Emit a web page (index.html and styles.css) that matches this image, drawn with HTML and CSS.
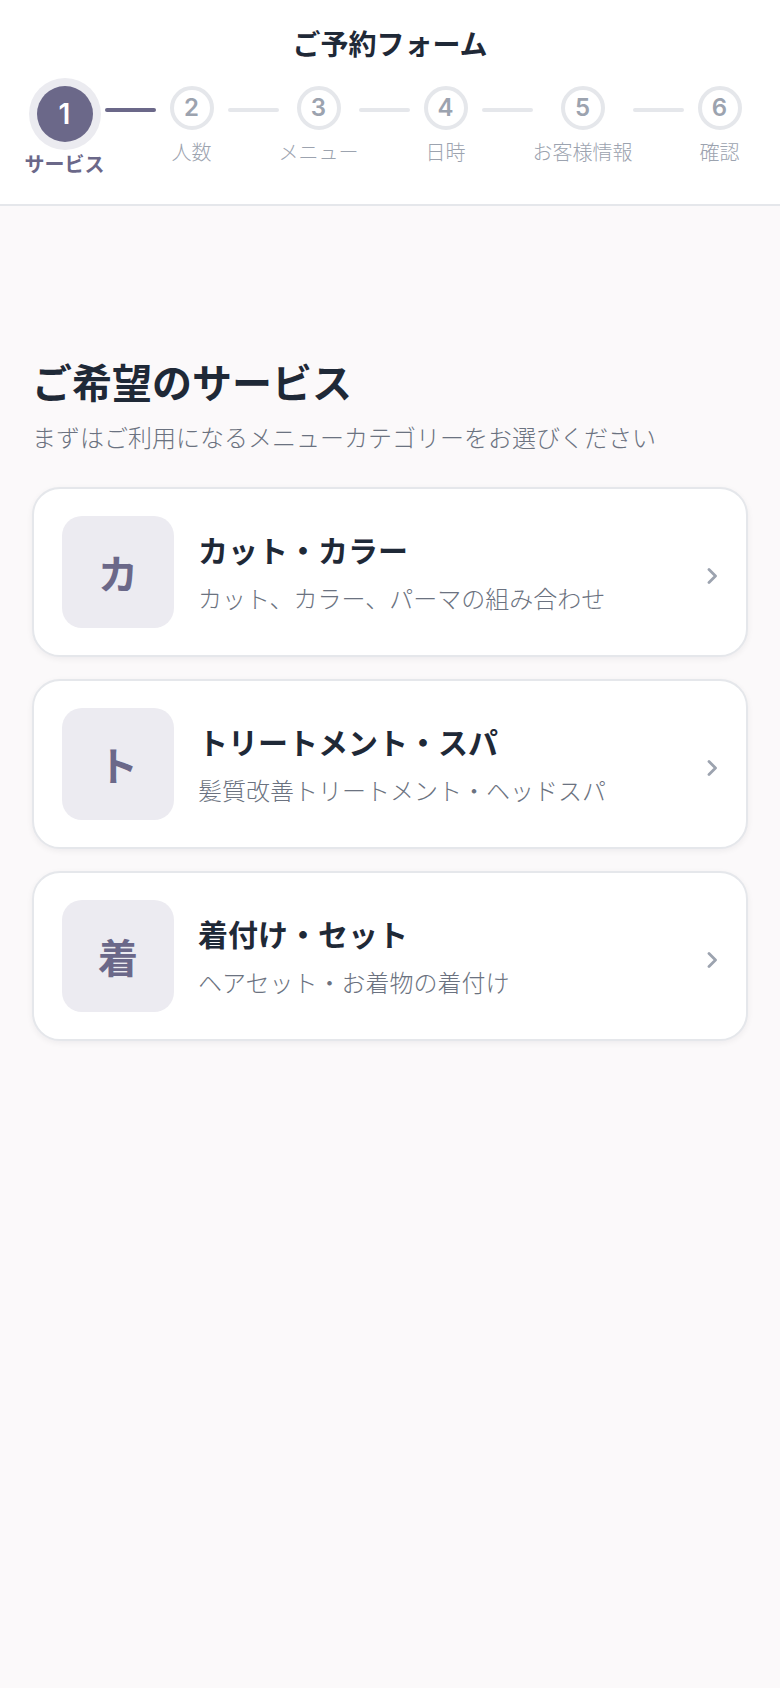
FILE: index.html
```html
<!DOCTYPE html>
<html lang="ja">
<head>
<meta charset="utf-8">
<title>ご予約フォーム</title>
<link rel="stylesheet" href="styles.css">
</head>
<body>
<header class="header">
  <h1 class="header-title">ご予約フォーム</h1>
  <ol class="steps">
    <li class="step step-active"><span class="step-circle">1</span><span class="step-label">サービス</span></li>
    <li class="step-line step-line-done"></li>
    <li class="step"><span class="step-circle">2</span><span class="step-label">人数</span></li>
    <li class="step-line"></li>
    <li class="step"><span class="step-circle">3</span><span class="step-label">メニュー</span></li>
    <li class="step-line"></li>
    <li class="step"><span class="step-circle">4</span><span class="step-label">日時</span></li>
    <li class="step-line"></li>
    <li class="step"><span class="step-circle">5</span><span class="step-label">お客様情報</span></li>
    <li class="step-line"></li>
    <li class="step"><span class="step-circle">6</span><span class="step-label">確認</span></li>
  </ol>
</header>
<main class="main">
  <h2 class="section-title">ご希望のサービス</h2>
  <p class="section-sub">まずはご利用になるメニューカテゴリーをお選びください</p>
  <div class="cards">
    <a class="card" href="#">
      <span class="card-icon">カ</span>
      <span class="card-body">
        <span class="card-title">カット・カラー</span>
        <span class="card-desc">カット、カラー、パーマの組み合わせ</span>
      </span>
      <svg class="chev" width="11" height="16" viewBox="0 0 11 16"><polyline points="2,1.5 8.5,8 2,14.5" fill="none" stroke="#9ca3af" stroke-width="2.8" stroke-linecap="round" stroke-linejoin="round"/></svg>
    </a>
    <a class="card" href="#">
      <span class="card-icon">ト</span>
      <span class="card-body">
        <span class="card-title">トリートメント・スパ</span>
        <span class="card-desc">髪質改善トリートメント・ヘッドスパ</span>
      </span>
      <svg class="chev" width="11" height="16" viewBox="0 0 11 16"><polyline points="2,1.5 8.5,8 2,14.5" fill="none" stroke="#9ca3af" stroke-width="2.8" stroke-linecap="round" stroke-linejoin="round"/></svg>
    </a>
    <a class="card" href="#">
      <span class="card-icon">着</span>
      <span class="card-body">
        <span class="card-title">着付け・セット</span>
        <span class="card-desc">ヘアセット・お着物の着付け</span>
      </span>
      <svg class="chev" width="11" height="16" viewBox="0 0 11 16"><polyline points="2,1.5 8.5,8 2,14.5" fill="none" stroke="#9ca3af" stroke-width="2.8" stroke-linecap="round" stroke-linejoin="round"/></svg>
    </a>
  </div>
</main>
</body>
</html>
```
FILE: styles.css
```css
* { box-sizing: border-box; }
html, body {
  margin: 0;
  padding: 0;
}
body {
  background: #fbf9fa;
  font-family: "Noto Sans CJK JP", "Noto Sans", sans-serif;
  color: #1f2937;
  min-height: 1688px;
}
.header {
  background: #ffffff;
  border-bottom: 2px solid #e5e7eb;
  padding: 22px 0 26px;
}
.header-title {
  margin: 0;
  text-align: center;
  font-size: 28px;
  line-height: 42px;
  font-weight: 700;
  color: #1f2937;
}
.steps {
  list-style: none;
  margin: 22px 0 0;
  padding: 0;
  display: flex;
  justify-content: center;
  align-items: flex-start;
}
.step {
  min-width: 72px;
  display: flex;
  flex-direction: column;
  align-items: center;
}
.step-circle {
  width: 44px;
  height: 44px;
  border-radius: 50%;
  border: 4px solid #e5e7eb;
  background: #ffffff;
  color: #9ca3af;
  font-family: Inter, "Noto Sans", sans-serif;
  font-size: 24px;
  font-weight: 600;
  display: flex;
  align-items: center;
  justify-content: center;
  line-height: 1;
}
.step-label {
  margin-top: 8px;
  font-size: 20px;
  line-height: 28px;
  font-weight: 300;
  color: #9ca3af;
  white-space: nowrap;
}
.step-active .step-circle {
  width: 56px;
  height: 56px;
  border: none;
  background: #6b6889;
  color: #ffffff;
  font-size: 28px;
  box-shadow: 0 0 0 8px #ebebf0;
}
.step-active .step-label {
  color: #6b6889;
  font-weight: 700;
}
.step-line {
  width: 51px;
  height: 4px;
  border-radius: 2px;
  background: #e5e7eb;
  margin-top: 22px;
  flex: none;
}
.step-line-done {
  background: #6b6889;
}
.main {
  padding: 147px 32px 0;
}
.section-title {
  margin: 0 0 10px;
  font-size: 40px;
  line-height: 56px;
  font-weight: 700;
  color: #1f2937;
}
.section-sub {
  margin: 0 0 32px;
  font-size: 24px;
  line-height: 36px;
  font-weight: 300;
  color: #6b7280;
}
.cards {
  display: flex;
  flex-direction: column;
  gap: 22px;
}
.card {
  display: flex;
  align-items: center;
  gap: 24px;
  background: #ffffff;
  border: 2px solid #e5e7eb;
  border-radius: 28px;
  padding: 27px 28px;
  text-decoration: none;
  box-shadow: 0 2px 6px rgba(17, 24, 39, 0.06);
}
.card-icon {
  flex: none;
  width: 112px;
  height: 112px;
  border-radius: 20px;
  background: #ecebf1;
  color: #6b6889;
  font-size: 40px;
  font-weight: 700;
  display: flex;
  align-items: center;
  justify-content: center;
}
.card-body {
  flex: 1;
  display: flex;
  flex-direction: column;
  gap: 10px;
  min-width: 0;
}
.card-title {
  font-size: 30px;
  line-height: 42px;
  font-weight: 700;
  color: #1f2937;
}
.card-desc {
  font-size: 24px;
  line-height: 36px;
  font-weight: 300;
  color: #6b7280;
}
.chev {
  flex: none;
  margin-top: 8px;
}
```
